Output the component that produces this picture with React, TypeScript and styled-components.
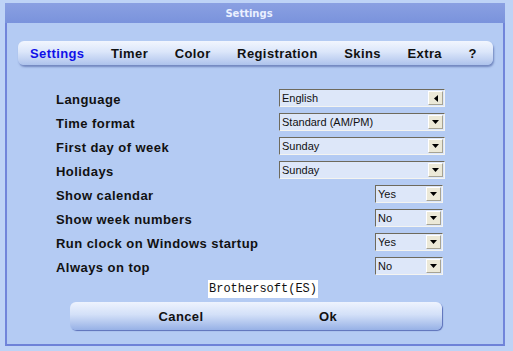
import React from "react";
import styled, { createGlobalStyle } from "styled-components";

const GlobalStyle = createGlobalStyle`
  html, body {
    margin: 0;
    padding: 0;
    background: #bed3f6;
  }
  body {
    font-family: "Liberation Sans", Arial, sans-serif;
  }
`;

const Window = styled.div`
  box-sizing: border-box;
  margin: 3px 0 0 5px;
  width: 500px;
  height: 343px;
  background: #b4cbf3;
  border-left: 2px solid #7185da;
  border-right: 2px solid #7185da;
  border-bottom: 2px solid #6e82d8;
  display: flex;
  flex-direction: column;
`;

const TitleBar = styled.div`
  height: 20px;
  margin: 0 -2px;
  background: linear-gradient(#8aa0e2, #7a93dc);
  color: #eaf0ff;
  font-family: "DejaVu Sans", Tahoma, sans-serif;
  font-size: 10px;
  font-weight: bold;
  display: flex;
  align-items: center;
  justify-content: center;
  padding-right: 12px;
`;

const TabBar = styled.nav`
  margin: 18px 10px 0 11px;
  height: 24px;
  border-radius: 6px;
  background: linear-gradient(#f2f6fe 0%, #dbe6fa 45%, #aec3ec 100%);
  box-shadow: 1px 2px 2px rgba(60, 80, 150, 0.55);
  display: flex;
  align-items: center;
  gap: 26.5px;
  padding-left: 12px;
`;

const Tab = styled.span<{ $active?: boolean }>`
  font-size: 13px;
  font-weight: bold;
  letter-spacing: 0.4px;
  color: ${(p) => (p.$active ? "#1010e8" : "#111")};
`;

const Form = styled.div`
  margin-top: 21px;
  padding-left: 49px;
  display: flex;
  flex-direction: column;
`;

const Row = styled.div`
  height: 24px;
  display: grid;
  grid-template-columns: 223px 166px;
  align-items: center;
`;

const Label = styled.span`
  font-size: 13px;
  font-weight: bold;
  letter-spacing: 0.45px;
  color: #111;
  padding-top: 3px;
`;

const Select = styled.div<{ $small?: boolean }>`
  box-sizing: border-box;
  height: 18px;
  width: ${(p) => (p.$small ? "68px" : "166px")};
  margin-left: ${(p) => (p.$small ? "96px" : "0")};
  border-top: 1px solid #6e6a5c;
  border-left: 1px solid #6e6a5c;
  border-right: 1px solid #f4f4f0;
  border-bottom: 1px solid #f4f4f0;
  background: #dde7f9;
  display: flex;
  align-items: stretch;
`;

const Value = styled.span`
  flex: 1;
  font-size: 11px;
  color: #111;
  line-height: 16px;
  padding-left: 2px;
`;

const DropButton = styled.span`
  box-sizing: border-box;
  width: 15px;
  margin: 1px 1px 1px 0;
  background: #ece9d8;
  border-top: 1px solid #fff;
  border-left: 1px solid #fff;
  border-right: 1px solid #a6a394;
  border-bottom: 1px solid #a6a394;
  display: flex;
  align-items: center;
  justify-content: center;
`;

const Credit = styled.div`
  align-self: center;
  margin: 2px 0 0 16px;
  background: #fff;
  padding: 2px 1px;
  font-family: "Liberation Mono", "Courier New", monospace;
  font-size: 12px;
  color: #111;
`;

const ButtonBar = styled.div`
  margin: 4px 61px 0 63px;
  height: 28px;
  border-radius: 6px;
  background: linear-gradient(#eef3fe 0%, #d3e0f8 45%, #97b1e6 100%);
  box-shadow: 1px 1px 1px #5a6fb8;
  display: flex;
  padding-left: 41px;
  gap: 7px;
`;

const Button = styled.button`
  width: 140px;
  border: none;
  background: transparent;
  font-family: "Liberation Sans", Arial, sans-serif;
  font-size: 13px;
  font-weight: bold;
  letter-spacing: 0.4px;
  color: #111;
  padding: 0;
`;

const Arrow = ({ dir }: { dir: "down" | "left" }) =>
  dir === "down" ? (
    <svg width="7" height="4" viewBox="0 0 7 4">
      <path d="M0 0h7L3.5 4z" fill="#000" />
    </svg>
  ) : (
    <svg width="4" height="7" viewBox="0 0 4 7">
      <path d="M4 0v7L0 3.5z" fill="#000" />
    </svg>
  );

type Field = { label: string; value: string; small?: boolean; arrow?: "down" | "left" };

const fields: Field[] = [
  { label: "Language", value: "English", arrow: "left" },
  { label: "Time format", value: "Standard (AM/PM)" },
  { label: "First day of week", value: "Sunday" },
  { label: "Holidays", value: "Sunday" },
  { label: "Show calendar", value: "Yes", small: true },
  { label: "Show week numbers", value: "No", small: true },
  { label: "Run clock on Windows startup", value: "Yes", small: true },
  { label: "Always on top", value: "No", small: true },
];

const tabs = ["Settings", "Timer", "Color", "Registration", "Skins", "Extra", "?"];

export default function App() {
  return (
    <>
      <GlobalStyle />
      <Window>
        <TitleBar>Settings</TitleBar>
        <TabBar>
          {tabs.map((t, i) => (
            <Tab key={t} $active={i === 0}>
              {t}
            </Tab>
          ))}
        </TabBar>
        <Form>
          {fields.map((f) => (
            <Row key={f.label}>
              <Label>{f.label}</Label>
              <Select $small={f.small}>
                <Value>{f.value}</Value>
                <DropButton>
                  <Arrow dir={f.arrow ?? "down"} />
                </DropButton>
              </Select>
            </Row>
          ))}
        </Form>
        <Credit>Brothersoft(ES)</Credit>
        <ButtonBar>
          <Button>Cancel</Button>
          <Button>Ok</Button>
        </ButtonBar>
      </Window>
    </>
  );
}
